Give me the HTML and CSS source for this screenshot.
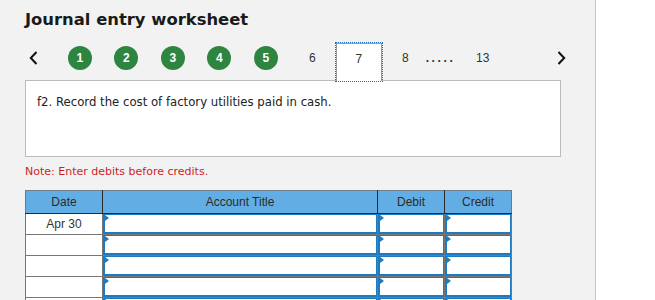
FILE: index.html
```html
<!DOCTYPE html>
<html lang="en">

<head>
    <meta charset="UTF-8">
    <title>Journal entry worksheet</title>
    <link rel="stylesheet" href="styles.css">
</head>

<body>
    <div class="panel">
        <h1 class="title">Journal entry worksheet</h1>

        <div class="pager">
            <span class="pager-item arrow">
                <svg width="9" height="14" viewBox="0 0 9 14"><path d="M7.5 1 L1.8 7 L7.5 13" fill="none" stroke="#111" stroke-width="2"/></svg>
            </span>
            <span class="pager-item"><span class="done">1</span></span>
            <span class="pager-item"><span class="done">2</span></span>
            <span class="pager-item"><span class="done">3</span></span>
            <span class="pager-item"><span class="done">4</span></span>
            <span class="pager-item"><span class="done">5</span></span>
            <span class="pager-item">6</span>
            <span class="pager-item current">7</span>
            <span class="pager-item">8</span>
            <span class="pager-dots">.....</span>
            <span class="pager-item last">13</span>
            <span class="pager-item arrow next">
                <svg width="9" height="14" viewBox="0 0 9 14"><path d="M1.5 1 L7.2 7 L1.5 13" fill="none" stroke="#111" stroke-width="2"/></svg>
            </span>
        </div>

        <div class="question">
            <p>f2. Record the cost of factory utilities paid in cash.</p>
        </div>

        <p class="note">Note: Enter debits before credits.</p>

        <table class="journal">
            <thead>
                <tr>
                    <th class="col-date">Date</th>
                    <th class="col-title">Account Title</th>
                    <th class="col-amt">Debit</th>
                    <th class="col-amt">Credit</th>
                </tr>
            </thead>
            <tbody>
                <tr>
                    <td class="date">Apr 30</td>
                    <td><div class="field"></div></td>
                    <td><div class="field"></div></td>
                    <td><div class="field"></div></td>
                </tr>
                <tr>
                    <td class="date"></td>
                    <td><div class="field"></div></td>
                    <td><div class="field"></div></td>
                    <td><div class="field"></div></td>
                </tr>
                <tr>
                    <td class="date"></td>
                    <td><div class="field"></div></td>
                    <td><div class="field"></div></td>
                    <td><div class="field"></div></td>
                </tr>
                <tr>
                    <td class="date"></td>
                    <td><div class="field"></div></td>
                    <td><div class="field"></div></td>
                    <td><div class="field"></div></td>
                </tr>
                <tr>
                    <td class="date"></td>
                    <td><div class="field"></div></td>
                    <td><div class="field"></div></td>
                    <td><div class="field"></div></td>
                </tr>
            </tbody>
        </table>
    </div>
</body>

</html>
```

FILE: styles.css
```css
body {
    margin: 0;
    background-color: #ffffff;
    font-family: "DejaVu Sans", Verdana, sans-serif;
}

.panel {
    width: 596px;
    height: 300px;
    background-color: #f2f2f2;
    border-right: 1px solid #c8c8c8;
    padding-left: 25px;
    box-sizing: border-box;
    overflow: hidden;
}

.title {
    margin: 0;
    padding-top: 10px;
    font-size: 16.4px;
    font-weight: bold;
    color: #1a1a1a;
    line-height: 20px;
}

.pager {
    display: flex;
    align-items: flex-start;
    margin-top: 13px;
    margin-left: -15px;
    padding-right: 10px;
    height: 37px;
    font-family: "Liberation Sans", Arial, sans-serif;
    font-size: 12px;
    color: #333;
}

.pager-item {
    width: 46.5px;
    height: 29px;
    padding-top: 1px;
    display: flex;
    justify-content: center;
    align-items: center;
    box-sizing: border-box;
}

.pager-item .done {
    width: 24px;
    height: 24px;
    border-radius: 50%;
    background-color: #2e8540;
    color: white;
    font-weight: bold;
    font-size: 12px;
    display: flex;
    justify-content: center;
    align-items: center;
}

.pager-item.next {
    margin-left: auto;
}

.pager-item.current {
    height: 38px;
    align-items: flex-start;
    padding-top: 8px;
    background-color: #ffffff;
    border: 1px solid #9a9a9a;
    border-bottom: none;
    outline: 1px dotted #1a6fb5;
    outline-offset: 0;
    position: relative;
    z-index: 1;
}

.pager-dots {
    width: 32px;
    height: 29px;
    margin-left: -6px;
    padding-left: 2px;
    display: flex;
    justify-content: center;
    align-items: center;
    font-weight: bold;
    letter-spacing: 2.6px;
    color: #333;
}

.pager-item.last {
    margin-left: 3px;
}

.question {
    width: 536px;
    height: 77px;
    background-color: #ffffff;
    border: 1px solid #bbbbbb;
    box-sizing: border-box;
}

.question p {
    margin: 0;
    padding: 14px 11px;
    font-size: 11.7px;
    color: #222;
}

.note {
    margin: 8px 0 0 0;
    font-size: 11px;
    line-height: 14px;
    color: #cc1f1f;
}

.journal {
    margin-top: 11px;
    border-collapse: collapse;
    width: 487px;
    table-layout: fixed;
    font-family: "Liberation Sans", Arial, sans-serif;
    font-size: 12px;
}

.journal th {
    height: 22px;
    padding: 0;
    background-color: #62aee4;
    color: #2b2b2b;
    font-weight: normal;
    border: 1px solid #2a2a2a;
    border-top-color: #6d7f8c;
}

.journal th:first-child {
    border-left-color: #777;
}

.journal th:last-child {
    border-right-color: #777;
}

.col-date {
    width: 76px;
}

.col-title {
    width: 274px;
}

.col-amt {
    width: 66px;
}

.journal td {
    height: 20px;
    padding: 0;
    border: 1px solid #777777;
    background-color: #ffffff;
}

.journal td.date {
    text-align: center;
    color: #333;
}

.field {
    height: 20px;
    border: 2px solid #1e7bbf;
    border-width: 1px 1px 2px 2px;
    box-sizing: border-box;
    background-color: #ffffff;
    position: relative;
}

.field::before {
    content: "";
    position: absolute;
    top: 0;
    left: 0;
    border-top: 3px solid transparent;
    border-bottom: 3px solid transparent;
    border-left: 4px solid #1e7bbf;
}
```
